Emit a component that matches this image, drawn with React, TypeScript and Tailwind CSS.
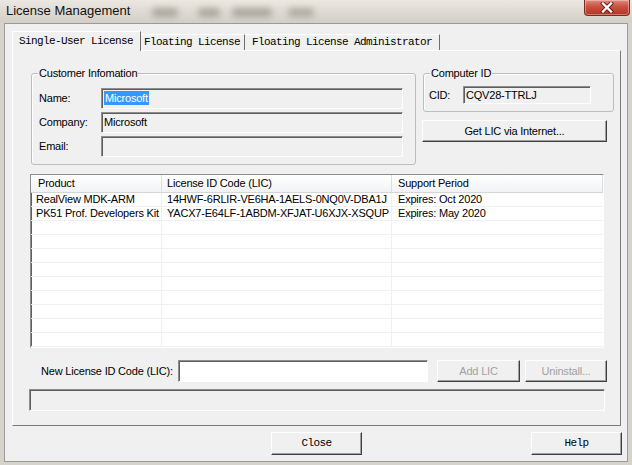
import React from 'react';

const ui = "font-['Liberation_Sans',Arial,sans-serif] text-[11px] tracking-[-0.2px] text-black";
const mono = "font-['Liberation_Mono','Courier_New',monospace] text-[11px] tracking-[-0.6px] text-black";

// classic 3D edges
const sunken =
  'border border-t-[#8d8d8d] border-l-[#8d8d8d] border-r-white border-b-white shadow-[inset_1px_1px_0_#5f5f5f]';
const raised =
  'border border-t-white border-l-white border-r-[#404040] border-b-[#404040] shadow-[inset_-1px_-1px_0_#a0a0a0]';

interface LicenseRow {
  product: string;
  lic: string;
  period: string;
}

const licenses: LicenseRow[] = [
  { product: 'RealView MDK-ARM', lic: '14HWF-6RLIR-VE6HA-1AELS-0NQ0V-DBA1J', period: 'Expires: Oct 2020' },
  { product: 'PK51 Prof. Developers Kit', lic: 'YACX7-E64LF-1ABDM-XFJAT-U6XJX-XSQUP', period: 'Expires: May 2020' },
];

const ROW_COUNT = 11;

const GroupBox = ({
  title,
  className,
  children,
}: {
  title: string;
  className: string;
  children: React.ReactNode;
}) => (
  <div className={`flex flex-col rounded-[3px] border border-[#bdbdbd] shadow-[inset_1px_1px_0_#fff] ${className}`}>
    <span className="-mt-[7px] ml-[6px] w-fit bg-[#f0f0f0] px-px leading-[13px]">{title}</span>
    {children}
  </div>
);

const Field = ({ label, value, selected }: { label: string; value?: string; selected?: boolean }) => (
  <div className="flex h-[21px] items-center">
    <span className="w-[69px] pl-[7px]">{label}</span>
    <div className={`flex h-[21px] w-[302px] items-start bg-[#f0f0f0] pl-[2px] pt-[2px] ${sunken}`}>
      {value && (
        <span className={selected ? 'bg-[#3399ff] px-px leading-[14px] text-white' : 'leading-[14px]'}>{value}</span>
      )}
    </div>
  </div>
);

const App = () => {
  const rows: (LicenseRow | null)[] = Array.from({ length: ROW_COUNT }, (_, i) => licenses[i] ?? null);

  return (
    <div className={`flex h-[465px] w-[632px] flex-col overflow-hidden bg-[#d6d3cb] ${ui}`}>
      {/* glass title bar */}
      <div className="flex h-[23px] items-start bg-[linear-gradient(180deg,#ebe8e2_0%,#dcd8d0_60%,#d3cfc6_100%)]">
        <span className="mt-[2px] ml-[6px] text-[13px] leading-[17px] tracking-normal text-[#111]">License Management</span>
        <span className="mt-[8px] ml-[22px] h-[9px] w-[26px] rounded bg-[#8c877e] opacity-60 blur-[3px]" />
        <span className="mt-[8px] ml-[20px] h-[9px] w-[22px] rounded bg-[#8c877e] opacity-60 blur-[3px]" />
        <span className="mt-[8px] ml-[12px] h-[9px] w-[40px] rounded bg-[#8c877e] opacity-60 blur-[3px]" />
        <span className="mt-[8px] ml-[16px] h-[9px] w-[26px] rounded bg-[#8c877e] opacity-55 blur-[3px]" />
        <div className="mt-0 mr-[2px] ml-auto flex h-[16px] w-[46px] items-center justify-center rounded-b-[4px] border border-t-0 border-[#7a2a22] bg-[linear-gradient(180deg,#e08a7e_0%,#c9503f_45%,#b23624_100%)] shadow-[inset_0_0_0_1px_rgba(255,255,255,0.35)]">
          <svg width="14" height="11" viewBox="0 0 14 11">
            <path d="M3 1.5 L11 9.5 M11 1.5 L3 9.5" stroke="#5a1a12" strokeWidth="4" strokeLinecap="square" />
            <path d="M3 1.5 L11 9.5 M11 1.5 L3 9.5" stroke="#fff" strokeWidth="2.4" strokeLinecap="square" />
          </svg>
        </div>
      </div>

      <div className="flex">
        <div className="w-[4px]" />
        {/* client area */}
        <div className="flex h-[439px] w-[624px] flex-col border border-[#9a9a9a] bg-[#f0f0f0]">
          {/* tabs */}
          <div className="flex items-end pt-[7px] pl-[7px]">
            <div
              className={`relative z-10 -mb-px flex h-[20px] w-[129px] items-center border-t border-r border-l border-t-white border-l-white border-r-[#6d6d6d] bg-[#f0f0f0] pl-[6px] ${mono}`}
            >
              Single-User License
            </div>
            <div
              className={`flex h-[16px] w-[104px] items-center border-t border-r border-t-white border-r-[#6d6d6d] pl-[3px] ${mono}`}
            >
              Floating License
            </div>
            <div
              className={`flex h-[16px] w-[195px] items-center border-t border-r border-t-white border-r-[#6d6d6d] pl-[7px] ${mono}`}
            >
              Floating License Administrator
            </div>
          </div>

          {/* tab page */}
          <div className="ml-[7px] flex h-[376px] w-[609px] flex-col border border-t-white border-l-white border-r-[#7a7a7a] border-b-[#7a7a7a]">
            <div className="mt-[22px] flex">
              <GroupBox title="Customer Infomation" className="ml-[18px] h-[92px] w-[385px]">
                <div className="mt-[8px] flex flex-col gap-[3px]">
                  <Field label="Name:" value="Microsoft" selected />
                  <Field label="Company:" value="Microsoft" />
                  <Field label="Email:" />
                </div>
              </GroupBox>

              <div className="ml-[6px] flex w-[192px] flex-col">
                <GroupBox title="Computer ID" className="ml-px h-[39px] w-[191px]">
                  <div className="mt-[6px] flex h-[18px] items-center">
                    <span className="w-[39px] pl-[5px]">CID:</span>
                    <div className={`flex h-[18px] w-[128px] items-center bg-[#f0f0f0] pl-[2px] ${sunken}`}>
                      CQV28-TTRLJ
                    </div>
                  </div>
                </GroupBox>
                <button className={`mt-[8px] h-[22px] w-[185px] bg-[#f0f0f0] ${raised}`}>Get LIC via Internet...</button>
              </div>
            </div>

            {/* license list */}
            <div className={`mt-[9px] ml-[17px] flex h-[174px] w-[574px] flex-col overflow-hidden bg-white ${sunken}`}>
              <div className="flex h-[18px] shrink-0 border-b border-[#d5d5d5] bg-[linear-gradient(180deg,#ffffff_0%,#f7f8f9_60%,#f1f2f4_100%)]">
                <div className="flex w-[131px] items-center border-r border-[#dedede] pl-[7px]">Product</div>
                <div className="flex w-[230px] items-center border-r border-[#dedede] pl-[5px]">License ID Code (LIC)</div>
                <div className="flex flex-1 items-center border-r border-[#dedede] pl-[6px]">Support Period</div>
              </div>
              {rows.map((row, i) => (
                <div key={i} className="flex h-[14px] shrink-0 border-b border-[#f0f0f0] leading-[13px]">
                  <div className="w-[131px] border-r border-[#f0f0f0] pl-[5px] whitespace-nowrap">{row?.product}</div>
                  <div className="w-[230px] border-r border-[#f0f0f0] pl-[5px] whitespace-nowrap">{row?.lic}</div>
                  <div className="flex-1 pl-[6px] whitespace-nowrap">{row?.period}</div>
                </div>
              ))}
            </div>

            {/* new license */}
            <div className="mt-[12px] flex h-[22px] items-center">
              <span className="ml-[28px] w-[137px]">New License ID Code (LIC):</span>
              <div className={`h-[22px] w-[250px] bg-white ${sunken}`} />
              <button className={`ml-[9px] h-[22px] w-[83px] bg-[#f0f0f0] text-[#a0a0a0] ${raised}`}>Add LIC</button>
              <button className={`ml-[5px] h-[22px] w-[82px] bg-[#f0f0f0] text-[#a0a0a0] ${raised}`}>Uninstall...</button>
            </div>

            <div className={`mt-[7px] ml-[16px] h-[22px] w-[576px] bg-[#f0f0f0] ${sunken}`} />
          </div>

          {/* dialog buttons */}
          <div className="mt-[6px] flex">
            <button className={`ml-[266px] h-[23px] w-[91px] bg-[#f0f0f0] ${raised} ${mono}`}>Close</button>
            <button className={`ml-[169px] h-[23px] w-[91px] bg-[#f0f0f0] ${raised} ${mono}`}>Help</button>
          </div>
        </div>
        <div className="w-[4px]" />
      </div>
    </div>
  );
};

export default App;
